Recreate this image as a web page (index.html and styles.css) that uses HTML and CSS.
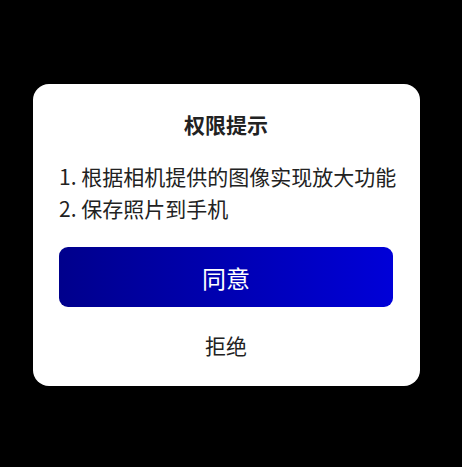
FILE: index.html
```html
<!DOCTYPE html>
<html lang="zh-CN">
<head>
    <meta charset="UTF-8">
    <meta name="viewport" content="width=device-width, initial-scale=1.0">
    <title>权限提示</title>
    <link rel="stylesheet" href="styles.css">
</head>
<body>
    <div class="dialog">
        <div class="dialog-title">权限提示</div>
        <div class="dialog-list">
            <div>1. 根据相机提供的图像实现放大功能</div>
            <div>2. 保存照片到手机</div>
        </div>
        <button class="btn-agree">同意</button>
        <button class="btn-refuse">拒绝</button>
    </div>
</body>
</html>
```

FILE: styles.css
```css
body {
    margin: 0;
    background: #000;
    font-family: "Noto Sans CJK SC", "Noto Sans", sans-serif;
    height: 467px;
    overflow: hidden;
}

.dialog {
    margin: 84px 0 0 33px;
    width: 387px;
    height: 302px;
    box-sizing: border-box;
    background: #fff;
    border-radius: 16px;
    padding: 0 27px 0 26px;
    display: flex;
    flex-direction: column;
}

.dialog-title {
    margin-top: 24px;
    text-align: center;
    font-size: 21px;
    font-weight: bold;
    color: #222;
    line-height: 32px;
}

.dialog-list {
    margin-top: 20px;
    font-size: 21px;
    line-height: 32px;
    color: #222;
    white-space: nowrap;
}

.btn-agree {
    margin-top: 23px;
    height: 60px;
    border: none;
    border-radius: 9px;
    background: linear-gradient(90deg, #00008c, #0000d8);
    color: #fff;
    font-family: inherit;
    font-size: 24px;
}

.btn-refuse {
    margin-top: 20px;
    border: none;
    background: none;
    padding: 0;
    font-family: inherit;
    font-size: 21px;
    line-height: 36px;
    color: #222;
}
```
